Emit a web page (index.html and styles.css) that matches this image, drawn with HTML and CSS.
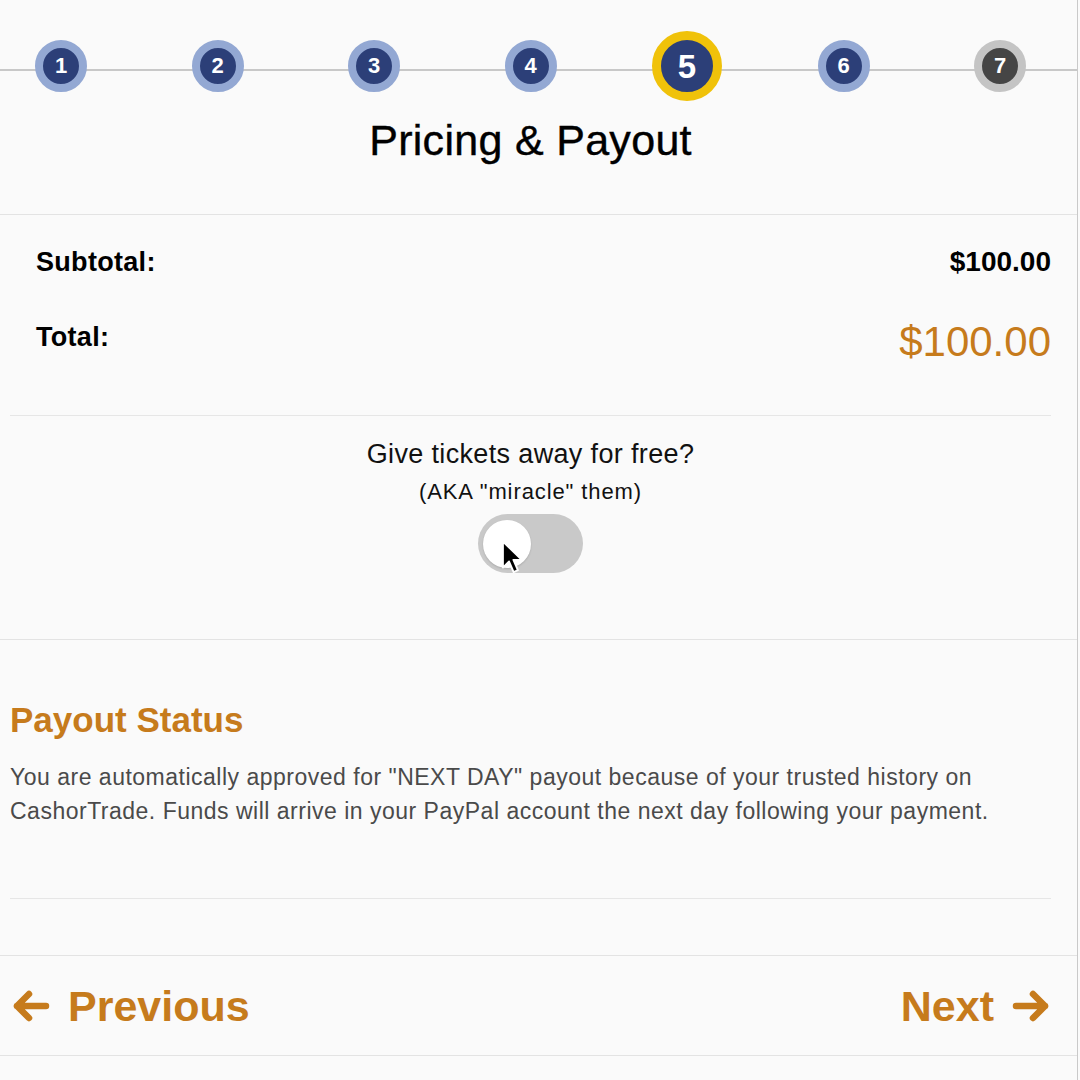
FILE: index.html
```html
<!DOCTYPE html>
<html lang="en">
<head>
<meta charset="utf-8">
<title>Pricing &amp; Payout</title>
<link rel="stylesheet" href="styles.css">
</head>
<body>
<div class="page">
  <header class="head">
    <ol class="steps">
      <li class="step"><span class="dot">1</span></li>
      <li class="step"><span class="dot">2</span></li>
      <li class="step"><span class="dot">3</span></li>
      <li class="step"><span class="dot">4</span></li>
      <li class="step"><span class="dot dot-current">5</span></li>
      <li class="step"><span class="dot">6</span></li>
      <li class="step"><span class="dot dot-todo">7</span></li>
    </ol>
    <h1 class="title">Pricing &amp; Payout</h1>
  </header>

  <section class="pricing">
    <div class="row row-sub">
      <span class="lbl">Subtotal:</span>
      <span class="val">$100.00</span>
    </div>
    <div class="row row-total">
      <span class="lbl lbl-total">Total:</span>
      <span class="val val-total">$100.00</span>
    </div>
  </section>

  <section class="free">
    <p class="q">Give tickets away for free?</p>
    <p class="q-sub">(AKA "miracle" them)</p>
    <div class="toggle">
      <span class="knob"></span>
      <svg class="cursor" width="24" height="35" viewBox="0 0 22 33">
        <path d="M1.5 1.5 L1.5 26 L7.3 20.3 L11.6 30.2 L15.6 28.5 L11.4 18.8 L19.5 18.8 Z" fill="#000" stroke="#fff" stroke-width="1.8" stroke-linejoin="round"/>
      </svg>
    </div>
  </section>

  <section class="payout">
    <h2 class="payout-h">Payout Status</h2>
    <p class="payout-p">You are automatically approved for "NEXT DAY" payout because of your trusted history on CashorTrade. Funds will arrive in your PayPal account the next day following your payment.</p>
  </section>

  <nav class="nav">
    <a class="nav-btn" href="#">
      <svg width="38" height="34" viewBox="0 0 38 34"><path d="M17 5 L5 17 L17 29 M5 17 H34" fill="none" stroke="#c67b1c" stroke-width="6.5" stroke-linecap="round" stroke-linejoin="round"/></svg>
      <span>Previous</span>
    </a>
    <a class="nav-btn" href="#">
      <span>Next</span>
      <svg width="38" height="34" viewBox="0 0 38 34"><path d="M21 5 L33 17 L21 29 M33 17 H4" fill="none" stroke="#c67b1c" stroke-width="6.5" stroke-linecap="round" stroke-linejoin="round"/></svg>
    </a>
  </nav>
</div>
</body>
</html>
```

FILE: styles.css
```css
* { box-sizing: border-box; }
html, body { margin: 0; padding: 0; }
body {
  background: #fafafa;
  font-family: "Liberation Sans", Arial, Helvetica, sans-serif;
  color: #000;
}
.page {
  width: 1078px;
  height: 1080px;
  border-right: 1px solid #c9c9c9;
  overflow: hidden;
}

/* header / stepper */
.head {
  border-bottom: 1px solid #e3e3e3;
  padding-bottom: 50px;
}
.steps {
  list-style: none;
  margin: 0;
  padding: 31px 0 0 0;
  display: grid;
  grid-template-columns: repeat(7, 122px);
  column-gap: 34.5px;
  background: linear-gradient(#c8c8c8, #c8c8c8) no-repeat;
  background-size: 100% 2px;
  background-position: 0 69px;
}
.step {
  height: 70px;
  display: flex;
  align-items: center;
  justify-content: center;
}
.dot {
  width: 52px;
  height: 52px;
  border-radius: 50%;
  border: 8px solid #93a8d3;
  background: #2c3f78;
  color: #fff;
  font-weight: bold;
  font-size: 22px;
  display: flex;
  align-items: center;
  justify-content: center;
  line-height: 1;
}
.dot-current {
  width: 70px;
  height: 70px;
  border: 9px solid #f0c20a;
  font-size: 33px;
}
.dot-todo {
  border-color: #c4c4c4;
  background: #454545;
}
.title {
  margin: 15px 0 0 0;
  padding-right: 16px;
  text-align: center;
  font-size: 43px;
  line-height: 48px;
  font-weight: normal;
  letter-spacing: 0.3px;
  -webkit-text-stroke: 0.4px #000;
}

/* pricing */
.pricing {
  margin: 0 26px 0 10px;
  padding: 31px 0 49px 26px;
  border-bottom: 1px solid #e6e6e6;
}
.row {
  display: flex;
  justify-content: space-between;
  align-items: flex-start;
}
.lbl {
  font-weight: bold;
  font-size: 27px;
  line-height: 32px;
  letter-spacing: 0.3px;
}
.val {
  font-weight: bold;
  font-size: 28px;
  line-height: 32px;
}
.row-total { margin-top: 40px; }
.lbl-total { margin-top: 3px; }
.val-total {
  font-weight: normal;
  font-size: 42px;
  line-height: 48px;
  color: #c67b1c;
}

/* free toggle */
.free {
  padding: 22px 16px 66px 0;
  border-bottom: 1px solid #e3e3e3;
  display: flex;
  flex-direction: column;
  align-items: center;
}
.q {
  margin: 0;
  font-size: 27px;
  line-height: 32px;
  letter-spacing: 0.35px;
  color: #111;
}
.q-sub {
  margin: 8px 0 0 0;
  font-size: 22px;
  line-height: 28px;
  letter-spacing: 0.9px;
  color: #111;
}
.toggle {
  position: relative;
  margin-top: 8px;
  width: 105px;
  height: 59px;
  border-radius: 30px;
  background: #c9c9c9;
  display: flex;
  align-items: center;
  padding-left: 5px;
}
.knob {
  width: 48px;
  height: 48px;
  border-radius: 50%;
  background: #fff;
  box-shadow: 0 1px 2px rgba(0,0,0,0.15);
}
.cursor {
  position: absolute;
  left: 23px;
  top: 26px;
}

/* payout */
.payout {
  margin: 0 26px 0 10px;
  padding: 60px 0 70px 0;
  border-bottom: 1px solid #e6e6e6;
}
.payout-h {
  margin: 0;
  font-size: 35px;
  line-height: 40px;
  font-weight: bold;
  color: #c67b1c;
}
.payout-p {
  margin: 20px 0 0 0;
  font-size: 23px;
  line-height: 34px;
  letter-spacing: 0.5px;
  color: #4a4a4a;
}

/* nav */
.nav {
  margin-top: 56px;
  border-top: 1px solid #e3e3e3;
  border-bottom: 1px solid #e3e3e3;
  padding: 27px 27px 26px 12px;
  display: flex;
  justify-content: space-between;
  align-items: center;
}
.nav-btn {
  display: flex;
  align-items: center;
  gap: 18px;
  text-decoration: none;
  color: #c67b1c;
  font-weight: bold;
  font-size: 43px;
  line-height: 46px;
}
.nav-btn svg { display: block; }
```
